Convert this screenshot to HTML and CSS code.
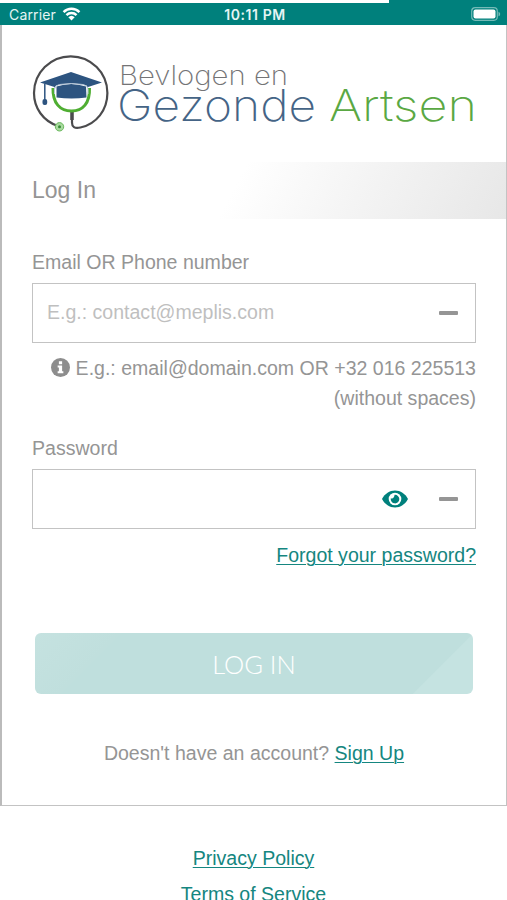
FILE: index.html
```html
<!DOCTYPE html>
<html lang="en">
<head>
  <meta charset="UTF-8" />
  <meta name="viewport" content="width=device-width, initial-scale=1.0" />
  <title>Log In - Bevlogen en Gezonde Artsen</title>
  <link rel="stylesheet" href="styles.css">
</head>
<body>
  <div class="status-bar">
    <div class="load-progress"></div>
    <div class="carrier">
      <span>Carrier</span>
      <svg class="wifi" viewBox="0 0 20 15" aria-hidden="true">
        <path d="M1.5 5.4a12 12 0 0 1 17 0M4.6 8.7a7.6 7.6 0 0 1 10.800 0" />
        <path class="wifi-dot" d="M10 14.500l-3.400-3.500a4.900 4.900 0 0 1 6.800 0z" />
      </svg>
    </div>
    <span class="clock">10:11 PM</span>
    <svg class="battery" viewBox="0 0 30 14" aria-hidden="true">
      <rect class="battery-case" x="0.700" y="0.700" width="25.600" height="12.600" rx="3.500" />
      <rect x="2.500" y="2.400" width="22" height="9.200" rx="2" />
      <path class="battery-cap" d="M27.500 4.700c2.200.8 2.200 3.800 0 4.600z" />
    </svg>
  </div>

  <main class="card">
    <svg class="logo" viewBox="0 0 446 84" role="img" aria-label="Bevlogen en Gezonde Artsen">
      <g class="tube">
        <path d="M26 76C11 71 2 58 2 43a36.700 36.700 0 1 1 73.400 0c0 17-11 31-27 34.500-6 1.200-8.400-.5-8.400-5V62" />
        <path class="tube-end" d="M40 61v9" />
      </g>
      <path class="ears" d="M21 38c-.5 15 7 23 18.500 23S58 53 57.500 38" />
      <path class="cap" d="M8 32.500L39 22l31 10.500-14 4.500v1l-1.500-2.500q-15-4-30.500 0L22.500 38v-1z" />
      <path class="cap" d="M24.500 36.500q14.500-5 29.500 0l.5 11q-15 2-30 0z" />
      <path class="cap-line" d="M22.500 44v-5q1-4 5-4.500 12-2 23.500 0 4.500.5 5 4.500v5" />
      <path class="tassel" d="M12.800 34v16" />
      <rect class="cap" x="10.500" y="49" width="4.700" height="6" rx="2" />
      <circle class="chest" cx="27.500" cy="76.800" r="4.200" />
      <circle class="chest-dot" cx="27.500" cy="76.800" r="1.500" />
      <text class="logo-small" x="87" y="34.500" textLength="169" lengthAdjust="spacingAndGlyphs">Bevlogen en</text>
      <text class="logo-blue" x="85" y="70.500" textLength="199" lengthAdjust="spacingAndGlyphs">Gezonde</text>
      <text class="logo-green" x="297" y="70.500" textLength="148" lengthAdjust="spacingAndGlyphs">Artsen</text>
    </svg>

    <h1 class="title">Log In</h1>

    <form class="login-form">
      <label for="login">Email OR Phone number</label>
      <div class="field">
        <input type="text" id="login" placeholder="E.g.: contact@meplis.com" />
        <span class="dash"></span>
      </div>
      <p class="hint">
        <svg class="info" viewBox="0 0 20 20" aria-hidden="true">
          <circle cx="10" cy="10" r="10" />
          <path d="M8.300 3.500h3.400v3H8.300zM7 8h4.700v6H13v2H7v-2h1.300v-4H7z" />
        </svg>
        E.g.: email@domain.com OR +32 016 225513 (without spaces)
      </p>

      <label for="password">Password</label>
      <div class="field">
        <input type="password" id="password" />
        <svg class="eye" viewBox="0 0 26 18" aria-hidden="true">
          <path d="M0 9C3 3.500 7.500.5 13 .5S23 3.500 26 9c-3 5.500-7.500 8.500-13 8.500S3 14.500 0 9z" />
          <circle class="eye-ring" cx="13" cy="9" r="6.300" />
          <path d="M12.600 4.800a4.300 4.300 0 1 1-3.800 3.500q3 1.200 3.800-3.500z" />
        </svg>
        <span class="dash"></span>
      </div>
      <a class="forgot" href="#">Forgot your password?</a>

      <button type="submit" class="login-button">LOG IN</button>
    </form>

    <p class="signup">Doesn't have an account? <a href="#">Sign Up</a></p>
  </main>

  <footer>
    <a href="#">Privacy Policy</a>
    <a href="#">Terms of Service</a>
  </footer>
</body>
</html>
```
FILE: styles.css
```css
* {
  box-sizing: border-box;
}
body {
  font-family: "Liberation Sans", Arial, sans-serif;
  font-size: 19.55px;
  margin: 0;
  height: 900px;
  overflow: hidden;
  background-color: #fff;
  color: #959595;
}
a {
  color: #158680;
  text-decoration: underline;
  text-decoration-thickness: 1px;
  text-underline-offset: 2px;
}

/* status bar */
.status-bar {
  position: relative;
  display: grid;
  grid-template-columns: 1fr auto 1fr;
  align-items: center;
  height: 25px;
  padding: 3px 6px 0 9px;
  background-color: #00807c;
  color: #e6f5f4;
  font-family: Inter, sans-serif;
  font-size: 14px;
}
.load-progress {
  position: absolute;
  top: 0;
  left: 0;
  width: 389px;
  height: 3px;
  background-color: #fff;
}
.carrier {
  display: flex;
  align-items: center;
  gap: 6px;
  letter-spacing: 0.15px;
}
.wifi {
  width: 19px;
  height: 14px;
  fill: none;
  stroke: #fff;
  stroke-width: 2.6;
}
.wifi .wifi-dot {
  fill: #fff;
  stroke: none;
}
.clock {
  font-weight: 600;
  font-size: 14px;
  letter-spacing: 0.6px;
}
.battery {
  justify-self: end;
  width: 30px;
  height: 14px;
  fill: #fff;
}
.battery .battery-case {
  fill: none;
  stroke: #75bab7;
  stroke-width: 1.200;
}
.battery .battery-cap {
  fill: #75bab7;
}

/* card */
.card {
  height: 781px;
  padding: 25px 0 0;
  border: 1px solid #c3c3c3;
  border-top: none;
  border-left: 2px solid #bbb;
}
.logo {
  display: block;
  width: 446px;
  height: 84px;
  margin-left: 30px;
  fill: none;
}
.tube {
  stroke: #4b4b4d;
  stroke-width: 2.2;
}
.tube .tube-end {
  stroke-width: 3.5;
}
.ears {
  stroke: #4fae32;
  stroke-width: 3;
}
.cap {
  fill: #2d5480;
}
.cap-line {
  stroke: #b8c8d8;
  stroke-width: 1;
}
.tassel {
  stroke: #2d5480;
  stroke-width: 1.500;
}
.chest {
  fill: #a9dba0;
  stroke: #69b85c;
}
.chest-dot {
  fill: #378a35;
}
.logo text {
  font-family: Inter, sans-serif;
  font-weight: 200;
}
.logo-small {
  fill: #747476;
  font-size: 27px;
}
.logo-blue {
  fill: #456486;
  font-size: 44px;
}
.logo-green {
  fill: #5aa843;
  font-size: 44px;
}
.title {
  height: 57px;
  margin: 28px 0 0;
  padding-left: 30px;
  background: linear-gradient(118deg, #fff 46%, #f4f4f4 70%, #e7e7e7 100%);
  font-size: 23px;
  font-weight: normal;
  line-height: 56px;
}

/* form */
.login-form {
  display: flex;
  flex-direction: column;
  padding: 30px 30px 0;
}
.login-form label {
  line-height: 26px;
}
.field {
  display: flex;
  align-items: center;
  height: 60px;
  margin-top: 8px;
  padding: 0 17px 0 14px;
  border: 1px solid #c3c3c3;
}
.field input {
  flex: 1;
  min-width: 0;
  padding: 0 0 1px;
  border: none;
  outline: none;
  background: none;
  color: #959595;
  font: inherit;
}
.field input::placeholder {
  color: #bfbfbf;
}
.dash {
  width: 19px;
  height: 4px;
  border-radius: 1px;
  background-color: #959595;
}
.hint {
  margin: 11px 0 22px;
  line-height: 29.5px;
  text-align: right;
}
.info {
  width: 19px;
  height: 19px;
  vertical-align: -2px;
  fill: #8d8d8d;
}
.info path {
  fill: #fff;
}
.eye {
  width: 26px;
  height: 18px;
  margin-right: 31px;
  fill: #00807c;
}
.eye .eye-ring {
  fill: #fff;
}
.forgot {
  align-self: flex-end;
  margin-top: 13px;
  line-height: 26px;
}
.login-button {
  height: 61px;
  margin: 65px 3px 0;
  border: none;
  border-radius: 6px;
  background:
    linear-gradient(135deg, #c5e2e0 0, #c0dfdd 60px, transparent 62px),
    linear-gradient(135deg, #bfdfdd calc(100% - 43px), #c5e3e1 calc(100% - 42px));
  color: #fff;
  font-family: Lato, sans-serif;
  font-size: 25.5px;
  font-weight: 300;
  cursor: pointer;
}
.signup {
  margin: 46px 0 0;
  line-height: 26px;
  text-align: center;
}

footer {
  display: flex;
  flex-direction: column;
  align-items: center;
  padding-top: 34px;
}
footer a {
  line-height: 36px;
}
```
